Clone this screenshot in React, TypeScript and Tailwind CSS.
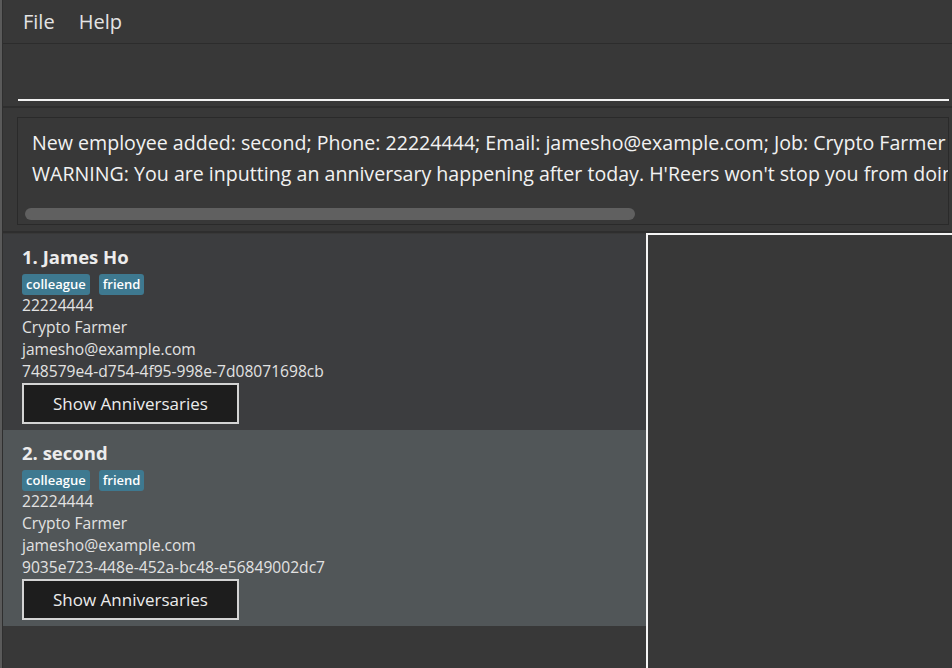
import React from 'react';

type Employee = {
  name: string;
  tags: string[];
  phone: string;
  job: string;
  email: string;
  id: string;
};

const EMPLOYEES: Employee[] = [
  {
    name: 'James Ho',
    tags: ['colleague', 'friend'],
    phone: '22224444',
    job: 'Crypto Farmer',
    email: 'jamesho@example.com',
    id: '748579e4-d754-4f95-998e-7d08071698cb',
  },
  {
    name: 'second',
    tags: ['colleague', 'friend'],
    phone: '22224444',
    job: 'Crypto Farmer',
    email: 'jamesho@example.com',
    id: '9035e723-448e-452a-bc48-e56849002dc7',
  },
];

const font = { fontFamily: '"Open Sans", "Noto Sans", sans-serif' };

function EmployeeCard({ emp, index }: { emp: Employee; index: number }) {
  const selected = index === 1;
  return (
    <div className={`h-[196px] pl-[19px] pt-[11px] ${selected ? 'bg-[#515658]' : 'bg-[#3c3d3f]'}`}>
      <div className="text-[18.5px] font-bold leading-[24px] text-[#ececec]">
        {index + 1}. {emp.name}
      </div>
      <div className="mt-[5px] flex gap-[9px]">
        {emp.tags.map((t) => (
          <span key={t} className="h-[21px] rounded-[3px] bg-[#3e7990] px-[4px] text-[13px] font-semibold leading-[21px] text-white">
            {t}
          </span>
        ))}
      </div>
      <div className="mt-[-1px] text-[15.6px] leading-[22px] text-[#e2e2e2]">
        <div>{emp.phone}</div>
        <div>{emp.job}</div>
        <div>{emp.email}</div>
        <div>{emp.id}</div>
      </div>
      <button className="mt-[1px] flex h-[41px] w-[217px] items-center justify-center border-2 border-[#d4d4d4] bg-[#1d1d1d] text-[17px] text-[#ececec]">
        Show Anniversaries
      </button>
    </div>
  );
}

export default function App() {
  return (
    <div className="flex h-[668px] w-[952px] overflow-hidden bg-[#383838]" style={font}>
      <div className="w-[2px] shrink-0 bg-[#5a5a5a]" />
      <div className="w-[1px] shrink-0 bg-[#2f2f2f]" />
      <div className="flex min-w-0 flex-1 flex-col">
        {/* Menu bar */}
        <div className="flex h-[44px] shrink-0 items-center gap-[24px] border-b border-[#2c2c2c] pl-[20px] text-[20px] text-[#e4e4e4]">
          <span>File</span>
          <span>Help</span>
        </div>

        {/* Command box */}
        <div className="flex h-[64px] shrink-0 flex-col justify-end border-b-2 border-[#2e2e2e] pb-[5px] pl-[15px] pr-[3px]">
          <div className="h-[2px] bg-[#f2f2f2]" />
        </div>

        {/* Result display */}
        <div className="h-[125px] shrink-0 border-b-2 border-[#2e2e2e] pl-[14px] pr-[3px] pt-[9px]">
          <div className="flex h-[108px] flex-col overflow-hidden border border-[#2a2a2a] pl-[14px] pt-[9px]">
            <div className="whitespace-nowrap text-[19.6px] leading-[31px] text-[#f2f2f2]">
              <div>New employee added: second; Phone: 22224444; Email: jamesho@example.com; Job: Crypto Farmer</div>
              <div>WARNING: You are inputting an anniversary happening after today. H'Reers won't stop you from doing this.</div>
            </div>
            <div className="mt-auto mb-[4px] ml-[-7px] h-[12px] w-[610px] shrink-0 rounded-full bg-[#606060]" />
          </div>
        </div>

        {/* Body */}
        <div className="flex min-h-0 flex-1">
          <div className="w-[643px] shrink-0 pt-[1px]">
            {EMPLOYEES.map((e, i) => (
              <EmployeeCard key={e.id} emp={e} index={i} />
            ))}
          </div>
          <div className="flex-1 border-l-2 border-t-2 border-[#f4f4f4] bg-[#383838]" />
        </div>
      </div>
    </div>
  );
}
